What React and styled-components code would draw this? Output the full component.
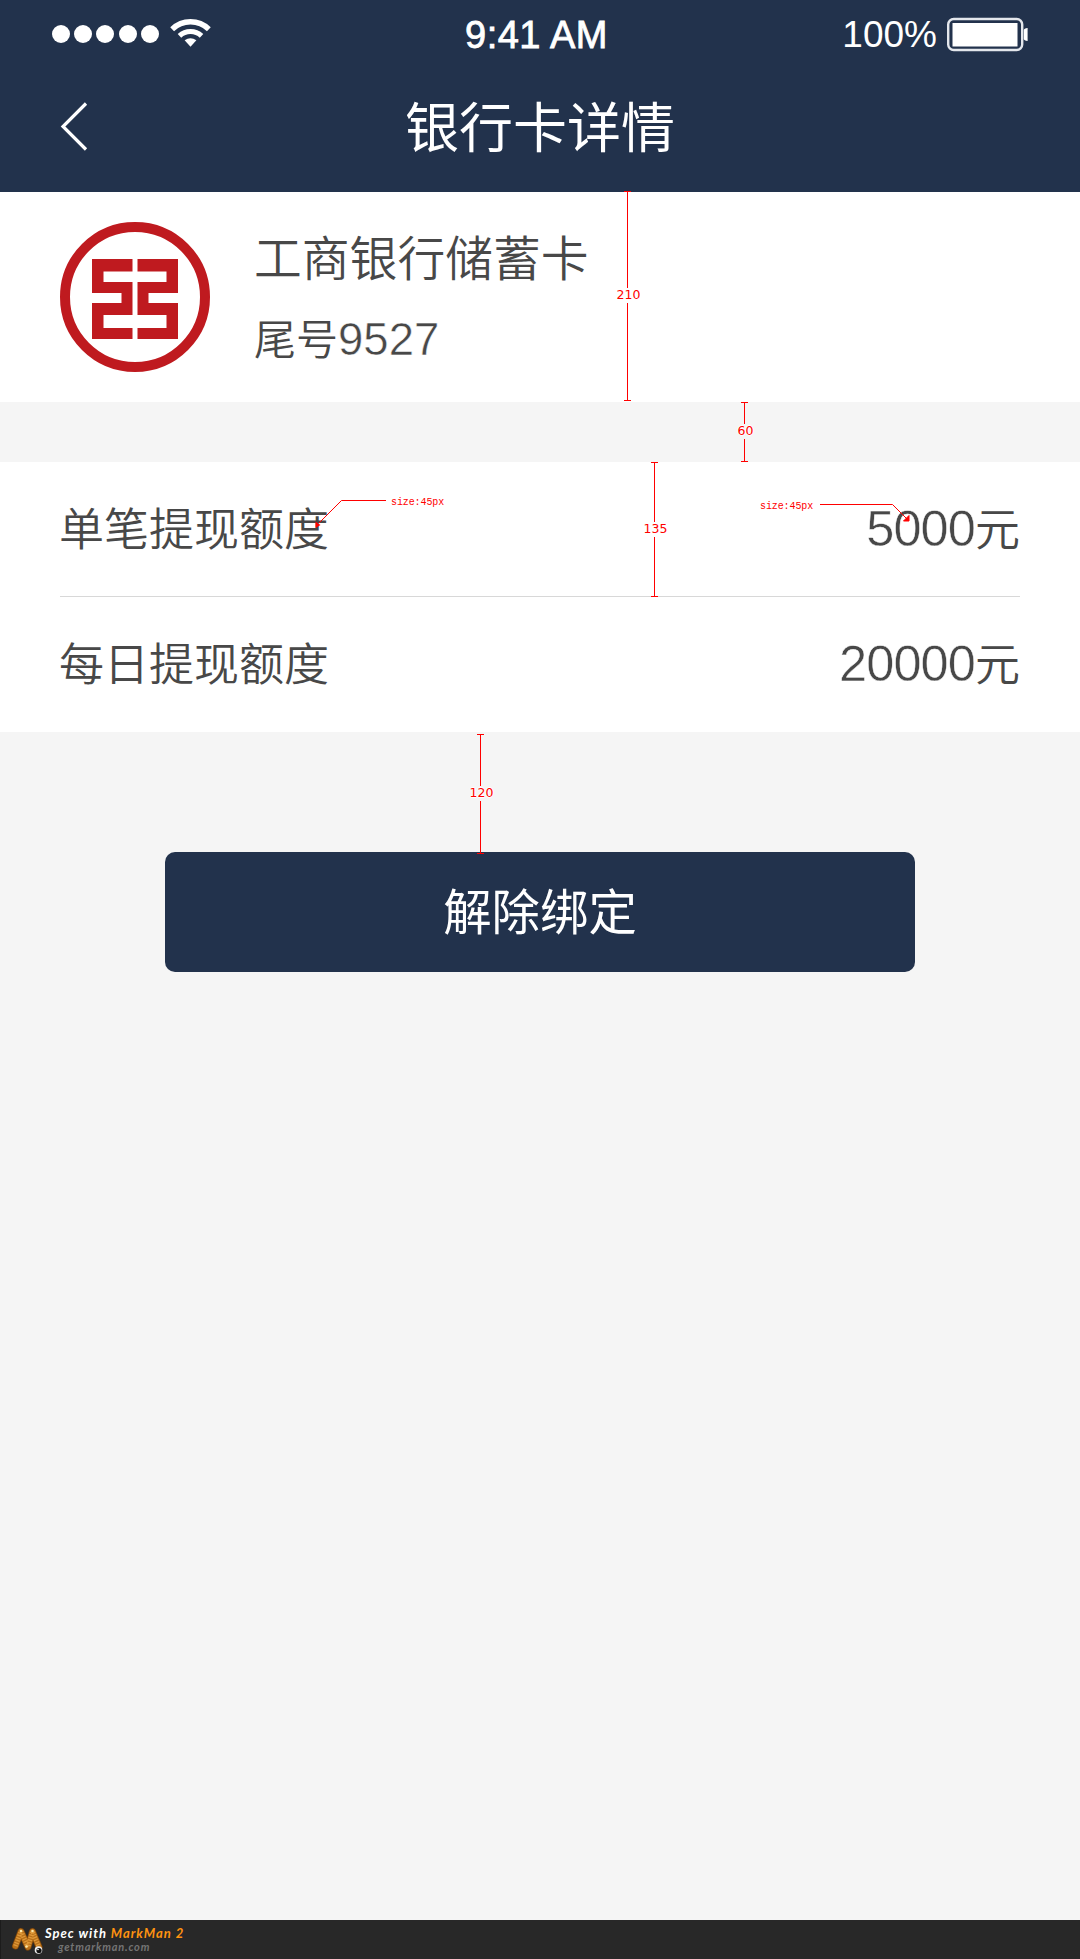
import React from "react";
import styled, { createGlobalStyle } from "styled-components";

const navy = "#22324c";
const ink = "#484848";
const spec = "#ff0000";

const GlobalStyle = createGlobalStyle`
  * { box-sizing: border-box; }
  body { margin: 0; background: #f5f5f5; }
`;

const Screen = styled.div`
  position: relative;
  width: 1080px;
  height: 1959px;
  overflow: hidden;
  display: flex;
  flex-direction: column;
  background: #f5f5f5;
  color: ${ink};
  font-family: "Liberation Sans", "Noto Sans CJK SC", sans-serif;
  white-space: nowrap;
`;

const Header = styled.header`
  flex: none;
  height: 192px;
  background: ${navy};
  color: #fff;
`;

const StatusBar = styled.div`
  display: grid;
  grid-template-columns: 1fr auto 1fr;
  align-items: center;
  height: 68px;
  padding: 0 52px 0 52px;
`;

const Signal = styled.div`
  display: flex;
  align-items: center;
  gap: 4.2px;
`;

const Dot = styled.span`
  width: 18px;
  height: 18px;
  border-radius: 50%;
  background: #fff;
`;

const WifiIcon = styled.svg`
  width: 41px;
  height: 30px;
  margin: -2px 0 0 7px;
`;

const Clock = styled.div`
  padding-top: 2px;
  font-size: 38px;
  line-height: 66px;
  -webkit-text-stroke: 0.8px #fff;
  letter-spacing: 0.5px;
  margin-right: 7px;
`;

const Power = styled.div`
  display: flex;
  align-items: center;
  justify-content: flex-end;
  gap: 10px;
  padding-top: 2px;
  font-size: 37px;
  line-height: 66px;
`;

const BatteryIcon = styled.svg`
  width: 82px;
  height: 36px;
  margin: 0 -1px 0 0;
`;

const NavBar = styled.nav`
  display: grid;
  grid-template-columns: 1fr auto 1fr;
  align-items: center;
  height: 116px;
  padding: 0 60px;
`;

const BackIcon = styled.svg`
  width: 30px;
  height: 50px;
`;

const Title = styled.h1`
  margin: 0;
  padding-top: 6px;
  font-size: 54px;
  font-weight: 400;
  line-height: 110px;
`;

const BankCard = styled.section`
  flex: none;
  display: flex;
  align-items: center;
  gap: 44px;
  height: 210px;
  padding: 0 60px;
  background: #fff;
`;

const BankLogo = styled.svg`
  width: 150px;
  height: 150px;
`;

const BankInfo = styled.div`
  display: flex;
  flex-direction: column;
  gap: 10px;
  padding-top: 6px;
`;

const BankName = styled.div`
  font-size: 47.8px;
  font-weight: 350;
  line-height: 70px;
`;

const BankTail = styled.div`
  font-size: 42px;
  font-weight: 350;
  line-height: 70px;
`;

const Digits = styled.span`
  font-size: ${(p) => p.$size}px;
  letter-spacing: ${(p) => p.$track || 0}px;
  -webkit-text-stroke: 0.5px #fff;
`;

const Limits = styled.section`
  flex: none;
  margin-top: 60px;
  height: 270px;
  padding: 0 60px;
  background: #fff;
`;

const LimitRow = styled.div`
  display: flex;
  align-items: center;
  justify-content: space-between;
  height: 135px;
  padding-top: 3px;
  font-size: 45px;
  font-weight: 350;
  line-height: 70px;
  box-shadow: ${(p) => (p.$last ? "none" : "inset 0 -1px #d8d8d8")};
`;

const LimitLabel = styled.span`
  margin-left: -1px;
`;

const LimitAmount = styled.span`
  margin-bottom: 2px;
`;

const UnbindButton = styled.button`
  flex: none;
  align-self: center;
  width: 750px;
  height: 120px;
  margin: 120px 0 0;
  padding: 3px 0 0;
  border: 0;
  border-radius: 10px;
  background: ${navy};
  color: #fff;
  font: 400 48.4px/115px "Liberation Sans", "Noto Sans CJK SC", sans-serif;
`;

const Footer = styled.footer`
  display: flex;
  align-items: flex-start;
  height: 39px;
  margin-top: auto;
  padding-left: 11px;
  background: #282828;
  box-shadow: inset 1px 0 #1c1c1c;
`;

const WormIcon = styled.svg`
  width: 34px;
  height: 39px;
`;

const Credits = styled.div`
  display: flex;
  flex-direction: column;
  font-family: Lato, sans-serif;
  font-style: italic;
  font-weight: 700;
`;

const CreditLine = styled.div`
  font-size: 13px;
  line-height: 14px;
  padding-top: 6px;
  letter-spacing: 0.98px;
  color: #fff;
`;

const Brand = styled.span`
  color: #ff9310;
`;

const CreditUrl = styled.div`
  padding-left: 13px;
  font-size: 11px;
  line-height: 14px;
  letter-spacing: 0.8px;
  color: #747474;
`;

const Measure = styled.div`
  position: absolute;
  left: ${(p) => p.$x - 3}px;
  top: ${(p) => p.$top}px;
  width: 7px;
  height: ${(p) => p.$size}px;
  display: grid;
  grid-template-rows: ${(p) => p.$label}px 15px 1fr;
  justify-items: center;
  justify-content: center;
  border: solid ${spec};
  border-width: 1px 0;
`;

const MeasureLine = styled.span`
  width: 1px;
  background: ${spec};
`;

const MeasureValue = styled.span`
  padding-left: 2px;
  font: 12.5px/14px "DejaVu Sans", sans-serif;
  color: ${spec};
  text-shadow: 1px 0 #fff, -1px 0 #fff, 0 1px #fff, 0 -1px #fff;
`;

const Callout = styled.div`
  position: absolute;
  left: ${(p) => p.$x}px;
  top: ${(p) => p.$y}px;
  display: flex;
  align-items: flex-start;
  gap: ${(p) => p.$gap}px;
  font: 10px/12px "Liberation Mono", monospace;
  letter-spacing: -0.1px;
  color: ${spec};
`;

const Pointer = styled.svg`
  width: ${(p) => p.$w}px;
  height: 32px;
  fill: none;
  stroke: ${spec};
`;

const measures = [
  { value: 210, x: 627, top: 191, size: 210, label: 96 },
  { value: 60, x: 744, top: 402, size: 60, label: 21 },
  { value: 135, x: 654, top: 462, size: 135, label: 59 },
  { value: 120, x: 480, top: 734, size: 120, label: 51 },
];

const limits = [
  { label: "单笔提现额度", amount: "5000" },
  { label: "每日提现额度", amount: "20000" },
];

export default function App() {
  return (
    <Screen>
      <GlobalStyle />
      <Header>
        <StatusBar>
          <Signal>
            {[0, 1, 2, 3, 4].map((n) => (
              <Dot key={n} />
            ))}
            <WifiIcon viewBox="0 0 42 30" fill="none" stroke="#fff">
              <path d="M2.2 11.2 A27 27 0 0 1 39.8 11.2" strokeWidth="5.6" />
              <path d="M9.7 18 A16.5 16.5 0 0 1 32.3 18" strokeWidth="5.2" />
              <path d="M15 22.5 Q21 18 27 22.5 L21 29 Z" fill="#fff" stroke="none" />
            </WifiIcon>
          </Signal>
          <Clock>9:41 AM</Clock>
          <Power>
            100%
            <BatteryIcon viewBox="0 0 82 36">
              <rect x="1.2" y="2" width="74" height="31" rx="5.5" fill="none" stroke="#e4e7ec" strokeWidth="2.4" />
              <rect x="5.5" y="6" width="65" height="23.5" fill="#fff" />
              <path d="M76.8 13 Q77 11.5 80.6 11 V24 Q77 23.5 76.8 22 Z" fill="#fff" />
            </BatteryIcon>
          </Power>
        </StatusBar>
        <NavBar>
          <BackIcon viewBox="0 0 30 50" fill="none" stroke="#fff" strokeWidth="3.2">
            <path d="M26 2.5 L3 25.5 L26 48.5" />
          </BackIcon>
          <Title>银行卡详情</Title>
        </NavBar>
      </Header>

      <BankCard>
        <BankLogo viewBox="0 0 150 150">
          <circle cx="75" cy="75" r="70" fill="none" stroke="#bf1a1f" strokeWidth="10" />
          <g fill="#bf1a1f">
            <path d="M32 37 H72.5 V49.5 H43.5 V60 H72.5 V93 H43.5 V106 H72.5 V117 H32 V81 H61.5 V71 H32 Z" />
            <path d="M77.5 37 H118 V71 H88.5 V81 H118 V117 H77.5 V106 H106.5 V93 H77.5 V60 H106.5 V49.5 H77.5 Z" />
          </g>
        </BankLogo>
        <BankInfo>
          <BankName>工商银行储蓄卡</BankName>
          <BankTail>
            尾号<Digits $size={45.5}>9527</Digits>
          </BankTail>
        </BankInfo>
      </BankCard>

      <Limits>
        {limits.map((row, i) => (
          <LimitRow key={row.label} $last={i === limits.length - 1}>
            <LimitLabel>{row.label}</LimitLabel>
            <LimitAmount>
              <Digits $size={50.5} $track={-0.9}>{row.amount}</Digits>元
            </LimitAmount>
          </LimitRow>
        ))}
      </Limits>

      <UnbindButton>解除绑定</UnbindButton>

      <Footer>
        <WormIcon viewBox="0 0 34 39">
          <g fill="none" strokeLinecap="round" strokeLinejoin="round">
            <path d="M4.5 26 L10 11.5 L17 27 L21.5 11.5 L28 27" stroke="#7d450a" strokeWidth="7" />
            <path d="M4.5 26 L10 11.5 L17 27 L21.5 11.5 L28 27" stroke="#b8701a" strokeWidth="5.6" />
            <path d="M4.5 26 L10 11.5 L17 27 L21.5 11.5 L28 27" stroke="#e09a3a" strokeWidth="4.6" strokeLinecap="butt" strokeDasharray="1.2 1.4" />
          </g>
          <circle cx="10" cy="11" r="1.3" fill="#ffe9a8" />
          <circle cx="21.5" cy="11" r="1.3" fill="#ffe9a8" />
          <circle cx="15.5" cy="26.5" r="1.3" fill="#ffe9a8" />
          <circle cx="27.5" cy="30" r="3.8" fill="#eee" />
          <circle cx="28" cy="30.5" r="2.6" fill="#111" />
          <circle cx="27" cy="29.5" r="0.8" fill="#fff" />
        </WormIcon>
        <Credits>
          <CreditLine>
            Spec with <Brand>MarkMan 2</Brand>
          </CreditLine>
          <CreditUrl>getmarkman.com</CreditUrl>
        </Credits>
      </Footer>

      {measures.map((m) => (
        <Measure key={m.value} $x={m.x} $top={m.top} $size={m.size} $label={m.label}>
          <MeasureLine />
          <MeasureValue>{m.value}</MeasureValue>
          <MeasureLine />
        </Measure>
      ))}

      <Callout $x={315} $y={497} $gap={5}>
        <Pointer $w={71} viewBox="0 0 71 32">
          <path d="M71 3.5 H26.5 L4 26" />
          <path d="M0.5 24.5 V31 L5.5 28 Z" fill={spec} stroke="none" />
        </Pointer>
        size:45px
      </Callout>
      <Callout $x={760} $y={501} $gap={7}>
        size:45px
        <Pointer $w={91} viewBox="0 0 91 32">
          <path d="M0 3.5 H72.5 L87 18" />
          <path d="M89 14.5 V20 H83.5 Z" fill={spec} />
        </Pointer>
      </Callout>
    </Screen>
  );
}
